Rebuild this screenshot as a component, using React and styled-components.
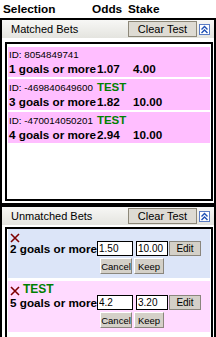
import React from "react";
import styled, { createGlobalStyle } from "styled-components";

const GlobalStyle = createGlobalStyle`
  html, body {
    margin: 0;
    padding: 0;
    background: #fff;
    overflow: hidden;
  }
  body {
    font-family: "Liberation Sans", Arial, sans-serif;
    color: #000;
  }
  * { box-sizing: border-box; }
`;

const apostasCasadas = [
  { id: "8054849741", teste: false, nome: "1 goals or more", odds: "1.07", stake: "4.00" },
  { id: "-469840649600", teste: true, nome: "3 goals or more", odds: "1.82", stake: "10.00" },
  { id: "-470014050201", teste: true, nome: "4 goals or more", odds: "2.94", stake: "10.00" },
];

const apostasAbertas = [
  { teste: false, lay: false, nome: "2 goals or more", odds: "1.50", stake: "10.00" },
  { teste: true, lay: true, nome: "5 goals or more", odds: "4.2", stake: "3.20" },
];

function IconeFechar() {
  return (
    <XIcon viewBox="0 0 10 10" width="10" height="10">
      <path d="M1 1 L9 9 M9 1 L1 9" stroke="#7d0000" strokeWidth="1.6" fill="none" />
    </XIcon>
  );
}

function CabecalhoPainel({ titulo }) {
  return (
    <PanelHeader>
      <PanelTitle>{titulo}</PanelTitle>
      <ClearButton>Clear Test</ClearButton>
      <Collapse>
        <svg viewBox="0 0 9 9" width="9" height="9">
          <path d="M1.5 4.5 L4.5 1.5 L7.5 4.5 M1.5 8 L4.5 5 L7.5 8" stroke="#1d4fb4" strokeWidth="1.4" fill="none" />
        </svg>
      </Collapse>
    </PanelHeader>
  );
}

export default function App() {
  return (
    <>
      <GlobalStyle />
      <Page>
        <ColumnHeader>
          <HeadCell $w="89px">Selection</HeadCell>
          <HeadCell $w="36px">Odds</HeadCell>
          <HeadCell>Stake</HeadCell>
        </ColumnHeader>

        <Panel $bottom="2px">
          <CabecalhoPainel titulo="Matched Bets" />
          <PanelBody $pad="4px 1px 2px 3px">
            <BetBox $h="159px" $pad="3px 1px" $gap="2px">
              {apostasCasadas.map((a) => (
                <MatchedRow key={a.id}>
                  <IdLine>
                    ID: {a.id}
                    {a.teste && <TestTag>TEST</TestTag>}
                  </IdLine>
                  <BetLine>
                    <span>{a.nome}</span>
                    <span>{a.odds}</span>
                    <span>{a.stake}</span>
                  </BetLine>
                </MatchedRow>
              ))}
            </BetBox>
          </PanelBody>
        </Panel>

        <Panel $bottom="0">
          <CabecalhoPainel titulo="Unmatched Bets" />
          <PanelBody $pad="2px 1px 0 3px">
            <BetBox $h="160px" $pad="0 1px" $gap="3px">
              {apostasAbertas.map((a) => (
                <UnmatchedRow key={a.nome} $lay={a.lay}>
                  <TopLine>
                    <IconeFechar />
                    {a.teste && <TestTag $big>TEST</TestTag>}
                  </TopLine>
                  <EditLine>
                    <BetName>{a.nome}</BetName>
                    <OddsInput $w="36px" defaultValue={a.odds} />
                    <OddsInput $w="32px" $gap="3px" defaultValue={a.stake} />
                    <EditButton>Edit</EditButton>
                  </EditLine>
                  <ActionLine>
                    <SmallButton $w="32px">Cancel</SmallButton>
                    <SmallButton $w="30px">Keep</SmallButton>
                  </ActionLine>
                </UnmatchedRow>
              ))}
            </BetBox>
          </PanelBody>
        </Panel>
      </Page>
    </>
  );
}

const Page = styled.div`
  width: 216px;
  height: 337px;
  overflow: hidden;
`;

const ColumnHeader = styled.div`
  display: flex;
  align-items: center;
  height: 18px;
  padding-left: 3px;
  font-size: 11.8px;
  font-weight: bold;
`;

const HeadCell = styled.div`
  width: ${(p) => p.$w || "auto"};
`;

const Panel = styled.section`
  width: 216px;
  border: 2px solid #000;
  border-bottom-width: ${(p) => p.$bottom};
`;

const PanelHeader = styled.div`
  display: flex;
  align-items: center;
  height: 18px;
  padding: 0 4px 0 9px;
  background: linear-gradient(#f7f7f5, #e4e4df);
`;

const PanelTitle = styled.span`
  flex: 1;
  font-size: 11px;
`;

const ClearButton = styled.button`
  width: 69px;
  height: 16px;
  margin-right: 2px;
  padding: 0;
  font-family: "Liberation Sans", Arial, sans-serif;
  font-size: 11px;
  color: #000;
  background: #dedbd3;
  border: 1px solid #8d8879;
`;

const Collapse = styled.span`
  width: 11px;
  height: 11px;
  display: flex;
  align-items: center;
  justify-content: center;
  background: #fff;
  border: 1px solid #5a7cc4;
`;

const PanelBody = styled.div`
  padding: ${(p) => p.$pad};
  background: #fff;
`;

const BetBox = styled.div`
  height: ${(p) => p.$h};
  padding: ${(p) => p.$pad};
  border: 2px solid #000;
  display: flex;
  flex-direction: column;
  gap: ${(p) => p.$gap};
`;

const MatchedRow = styled.div`
  background: #ffbeff;
  padding: 2px 1px 1px;
`;

const IdLine = styled.div`
  display: flex;
  align-items: baseline;
  gap: 4px;
  font-size: 9.8px;
  line-height: 12px;
  white-space: nowrap;
`;

const TestTag = styled.span`
  color: #008000;
  font-weight: bold;
  font-size: ${(p) => (p.$big ? "12px" : "11.5px")};
  line-height: ${(p) => (p.$big ? "11px" : "12px")};
`;

const BetLine = styled.div`
  display: grid;
  grid-template-columns: 88px 36px 1fr;
  font-size: 11.7px;
  font-weight: bold;
  line-height: 15px;
  white-space: nowrap;
`;

const UnmatchedRow = styled.div`
  background: ${(p) => (p.$lay ? "#ffdaff" : "#dce5f8")};
  padding: 3px 0 4px 2px;
`;

const TopLine = styled.div`
  display: flex;
  align-items: center;
  gap: 3px;
`;

const XIcon = styled.svg`
  display: block;
  margin: 1px 0 -2px 0;
`;

const EditLine = styled.div`
  display: flex;
  align-items: center;
  height: 15px;
`;

const BetName = styled.span`
  width: 87px;
  font-size: 11.7px;
  font-weight: bold;
  white-space: nowrap;
`;

const OddsInput = styled.input`
  width: ${(p) => p.$w};
  height: 15px;
  margin-left: ${(p) => p.$gap || "0"};
  padding: 0 1px;
  border: 1px solid #000;
  background: #fff;
  font-family: "Liberation Sans", Arial, sans-serif;
  font-size: 10px;
  color: #000;
`;

const EditButton = styled.button`
  width: 32px;
  height: 15px;
  margin-left: 1px;
  padding: 0;
  font-family: "Liberation Sans", Arial, sans-serif;
  font-size: 10px;
  color: #000;
  background: #d4d0c8;
  border: 1px solid #8a867d;
`;

const ActionLine = styled.div`
  display: flex;
  gap: 2px;
  margin-top: 2px;
  padding-left: 90px;
`;

const SmallButton = styled.button`
  width: ${(p) => p.$w};
  height: 16px;
  padding: 0;
  font-family: "Liberation Sans", Arial, sans-serif;
  font-size: 9.5px;
  color: #000;
  background: #d4d0c8;
  border: 1px solid;
  border-color: #fff #8a867d #8a867d #fff;
`;
